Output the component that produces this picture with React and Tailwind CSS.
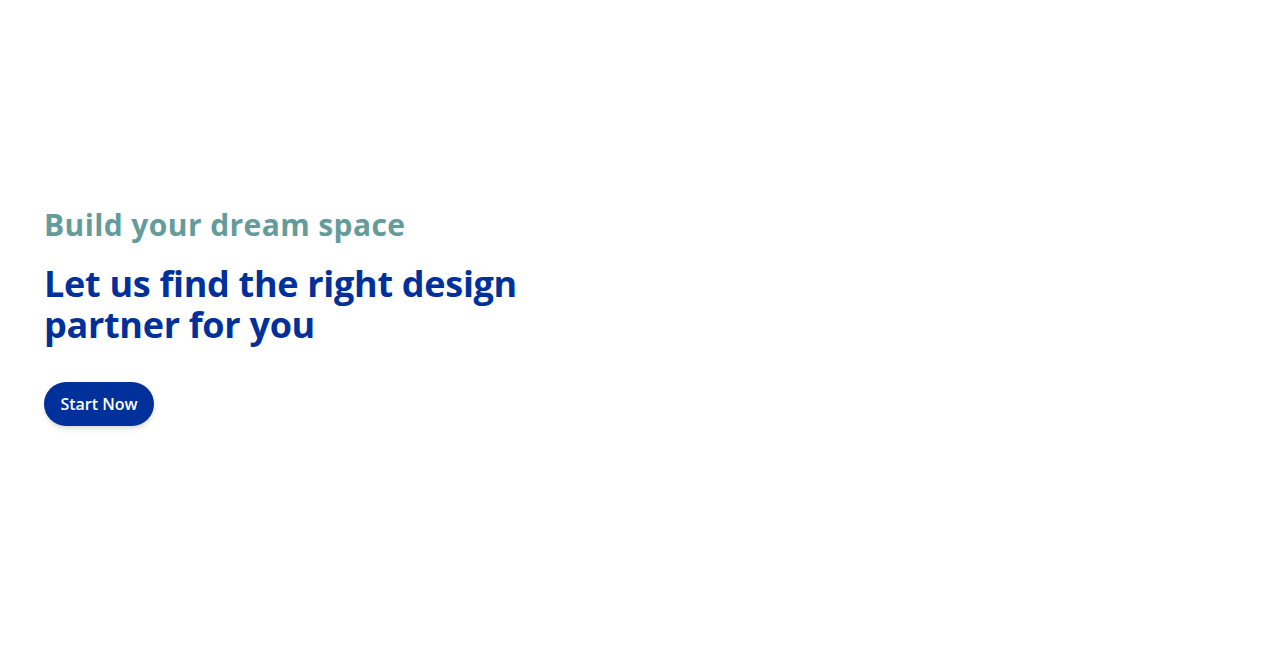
import React from "react";

const App = () => {
  return (
    <div
      className="min-h-screen w-full bg-white flex items-center"
      style={{ fontFamily: '"Open Sans", "Liberation Sans", sans-serif' }}
    >
      <div className="pl-[44px] pb-[36px] flex flex-col items-start">
        <h2 className="text-[30px] leading-[36px] font-bold tracking-[0.4px] text-[#649b9b]">
          Build your dream space
        </h2>
        <h1 className="mt-[20px] text-[36px] leading-[41px] font-bold tracking-[-0.3px] text-[#00309a] max-w-[520px]">
          Let us find the right design partner for you
        </h1>
        <button className="mt-[37px] h-[44px] w-[110px] rounded-full bg-[#00309a] text-white text-[16px] font-semibold shadow-md">
          Start Now
        </button>
      </div>
    </div>
  );
};

export default App;
